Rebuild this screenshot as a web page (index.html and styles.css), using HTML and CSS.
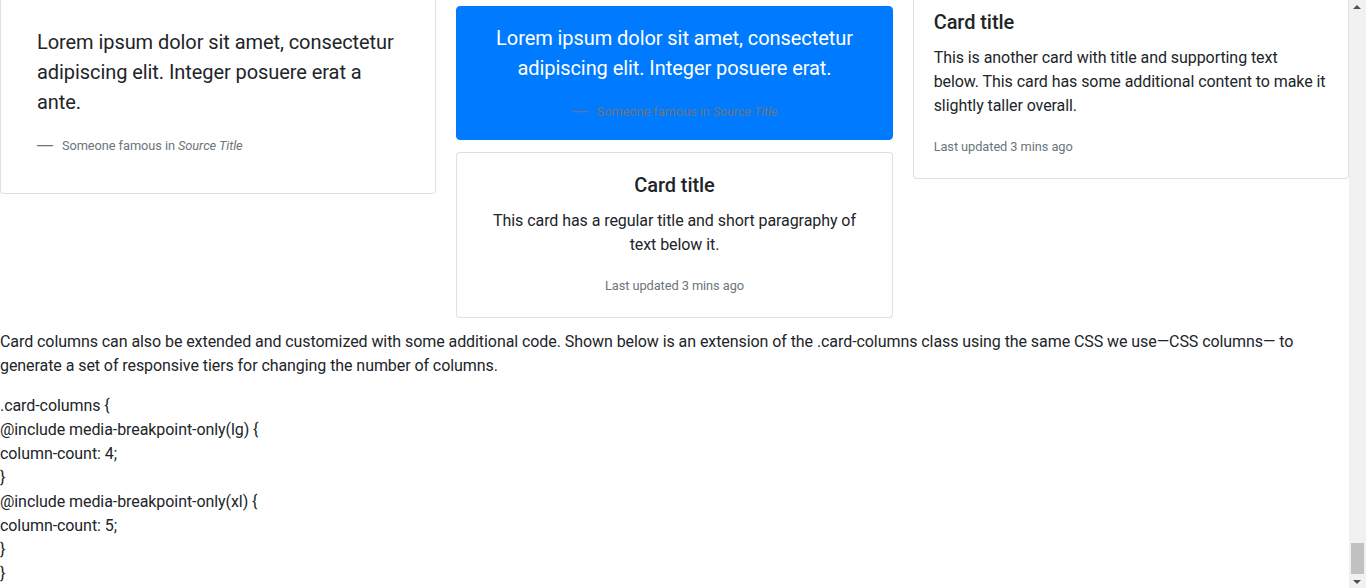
FILE: index.html
```html
<!DOCTYPE html>
<html lang="en">
<head>
<meta charset="utf-8">
<title>Card columns</title>
<link rel="stylesheet" href="styles.css">
</head>
<body>
<div class="window">
  <main class="page">
    <div class="card-columns">
      <div class="col col-a">
        <div class="card p-3">
          <blockquote class="blockquote card-body">
            <p>Lorem ipsum dolor sit amet, consectetur adipiscing elit. Integer posuere erat a ante.</p>
            <footer class="blockquote-footer"><small class="text-muted">Someone famous in <cite title="Source Title">Source Title</cite></small></footer>
          </blockquote>
        </div>
      </div>
      <div class="col col-b">
        <div class="card bg-primary text-white text-center p-3">
          <blockquote class="blockquote">
            <p>Lorem ipsum dolor sit amet, consectetur adipiscing elit. Integer posuere erat.</p>
            <footer class="blockquote-footer"><small>Someone famous in <cite title="Source Title">Source Title</cite></small></footer>
          </blockquote>
        </div>
        <div class="card text-center">
          <div class="card-body">
            <h5 class="card-title">Card title</h5>
            <p class="card-text keep-lines">This card has a regular title and short paragraphy of<br>text below it.</p>
            <p class="card-text"><small class="text-muted">Last updated 3 mins ago</small></p>
          </div>
        </div>
      </div>
      <div class="col col-c">
        <div class="card">
          <div class="card-body">
            <h5 class="card-title">Card title</h5>
            <p class="card-text keep-lines">This is another card with title and supporting text<br>below. This card has some additional content to make it<br>slightly taller overall.</p>
            <p class="card-text"><small class="text-muted">Last updated 3 mins ago</small></p>
          </div>
        </div>
      </div>
    </div>
    <p class="intro">Card columns can also be extended and customized with some additional code. Shown below is an extension of the .card-columns class using the same CSS we use—CSS columns— to generate a set of responsive tiers for changing the number of columns.</p>
    <p class="code">.card-columns {<br>@include media-breakpoint-only(lg) {<br>column-count: 4;<br>}<br>@include media-breakpoint-only(xl) {<br>column-count: 5;<br>}<br>}</p>
  </main>
  <div class="scrollbar">
    <div class="sb-arrow sb-up"></div>
    <div class="sb-track"><div class="sb-thumb"></div></div>
    <div class="sb-arrow sb-down"></div>
  </div>
</div>
</body>
</html>
```
FILE: styles.css
```css
* { box-sizing: border-box; }
html, body { margin: 0; padding: 0; background: #fff; }
body {
  font-family: Roboto, "Noto Sans", sans-serif;
  font-size: 16px;
  line-height: 1.5;
  color: #212529;
  letter-spacing: -0.07px;
}
.window {
  display: flex;
  width: 1366px;
  height: 588px;
  overflow: hidden;
}
.page {
  flex: 1;
  min-width: 0;
  overflow: hidden;
}
.card-columns {
  display: grid;
  grid-template-columns: repeat(3, 1fr);
  column-gap: 20px;
  align-items: start;
}
.col { display: flex; flex-direction: column; }
.col-a { margin-top: -10px; }
.col-b { padding-top: 6px; }
.col-c { margin-top: -11px; }
.card {
  background: #fff;
  border: 1px solid rgba(0, 0, 0, 0.125);
  border-radius: 4px;
  margin-bottom: 12px;
}
.p-3 { padding: 16px; }
.card-body { padding: 20px; }
.blockquote { margin: 0; font-size: 20px; }
.blockquote p { margin: 0 0 16px; }
.blockquote-footer {
  display: block;
  font-size: 80%;
  color: #6c757d;
}
.blockquote-footer::before {
  content: "\2014";
  font-family: "Liberation Sans", sans-serif;
  padding-right: 9px;
}
.blockquote-footer small { font-size: 80%; }
.text-muted { color: #6c757d; }
cite { font-style: italic; }
.bg-primary { background: #007bff; border-color: #007bff; }
.text-white { color: #fff; }
.text-white .blockquote-footer small { color: #6c757d; }
.text-center { text-align: center; }
.card-title {
  margin: 0 0 12px;
  font-size: 20px;
  font-weight: 500;
  line-height: 1.2;
}
.card-text { margin: 0 0 16px; }
.card-text:last-child { margin-bottom: 0; }
.card-text small { font-size: 80%; }
.keep-lines { white-space: nowrap; }
.intro { margin: 0 0 16px; }
.code { margin: 0; }
.scrollbar {
  width: 17px;
  flex: none;
  background: #f1f1f1;
  display: flex;
  flex-direction: column;
  align-items: center;
}
.sb-arrow { width: 17px; height: 17px; flex: none; position: relative; }
.sb-up::after, .sb-down::after {
  content: "";
  position: absolute;
  left: 4px;
  width: 0; height: 0;
  border-left: 4px solid transparent;
  border-right: 4px solid transparent;
}
.sb-up::after { top: 5px; border-bottom: 4px solid #505050; }
.sb-down::after { bottom: 4px; border-top: 4px solid #505050; }
.sb-track { flex: 1; width: 100%; display: flex; flex-direction: column; justify-content: flex-end; padding: 0 2px; }
.sb-thumb { height: 31px; background: #c1c1c1; margin-bottom: -3px; }
```
